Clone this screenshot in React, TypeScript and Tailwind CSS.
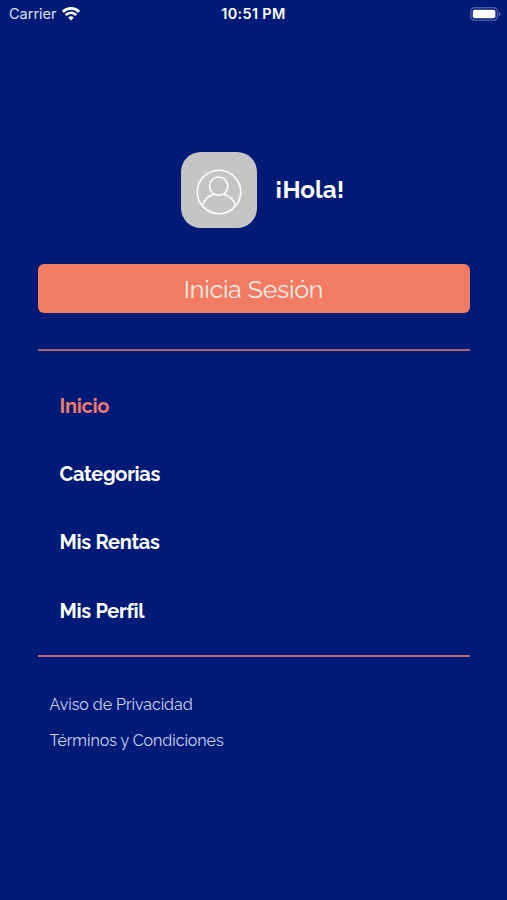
type MenuItem = {
  label: string;
  className: string;
};

const menuItems: MenuItem[] = [
  { label: 'Inicio', className: 'text-[#f07a68]' },
  { label: 'Categorias', className: 'text-white' },
  { label: 'Mis Rentas', className: 'text-white' },
  { label: 'Mis Perfil', className: 'text-white' },
];

const legalLinks = ['Aviso de Privacidad', 'Términos y Condiciones'];

function WifiIcon() {
  return (
    <svg width="18" height="14" viewBox="0 0 18 14" fill="none" stroke="white" strokeWidth="2.6">
      <path d="M0.9 4.8a11.4 11.4 0 0 1 16.2 0" />
      <path d="M3.8 8a7.3 7.3 0 0 1 10.4 0" />
      <path d="M9 13.4 6.2 10.5a4 4 0 0 1 5.6 0Z" fill="white" stroke="none" />
    </svg>
  );
}

function BatteryIcon() {
  return (
    <svg width="32" height="14" viewBox="0 0 32 14" fill="none">
      <rect x="0.8" y="0.8" width="26.6" height="12.4" rx="3.6" stroke="#6070b0" strokeWidth="1.1" />
      <rect x="2.8" y="2.7" width="22.6" height="8.6" rx="1.8" fill="white" />
      <path d="M28.9 4.8c2.2.8 2.2 3.6 0 4.4Z" fill="#6070b0" />
    </svg>
  );
}

function StatusBar() {
  return (
    <div className="grid grid-cols-3 items-center h-7 pl-[9px] pr-[5px] font-['Inter','Liberation_Sans',sans-serif] text-white">
      <div className="flex items-center gap-[5px]">
        <span className="text-[14.5px] leading-none text-[#dde3f5]">Carrier</span>
        <WifiIcon />
      </div>
      <span className="-ml-1 text-center text-[14.4px] leading-none font-semibold tracking-[0.35px] whitespace-nowrap">
        10:51 PM
      </span>
      <div className="flex justify-end">
        <BatteryIcon />
      </div>
    </div>
  );
}

function Avatar() {
  return (
    <div className="w-[76px] h-[76px] rounded-[20px] bg-[#c5c5c5] flex items-center justify-center">
      <svg width="46" height="46" viewBox="0 0 46 46" fill="none" stroke="white" strokeWidth="1.6" className="mt-[3px]">
        <circle cx="23" cy="23" r="21.7" />
        <circle cx="22.7" cy="17.2" r="9.2" />
        <path d="M6.2 36.8C8.4 30.4 12.6 26.6 18.2 25.2M27.4 25.2C33.2 26.6 37.6 30.4 39.8 36.8" />
      </svg>
    </div>
  );
}

export default function App() {
  return (
    <div className="w-full h-[900px] overflow-hidden bg-[#001a78] font-['Raleway','Lato',sans-serif]">
      <StatusBar />

      <main className="px-[37.5px] pt-[124px]">
        {/* Greeting */}
        <div className="flex items-center pl-[143.5px] gap-[18px]">
          <Avatar />
          <h1 className="text-[24.3px] leading-8 font-bold text-white">¡Hola!</h1>
        </div>

        <button className="mt-9 w-full h-[49px] pt-0.5 rounded-md bg-[#f27b63] text-[25px] leading-none tracking-[-0.22px] text-[#fff0e8]">
          Inicia Sesión
        </button>

        {/* Menu */}
        <hr className="mt-9 h-0.5 border-0 bg-[#a9627a]" />
        <nav className="h-[304px] pt-[20.5px] pl-[22px]">
          {menuItems.map((item) => (
            <a
              key={item.label}
              className={`flex items-center h-[68.4px] text-[20px] font-bold tracking-[-0.3px] [font-variant-ligatures:common-ligatures] ${item.className}`}
            >
              {item.label}
            </a>
          ))}
        </nav>
        <hr className="h-0.5 border-0 bg-[#b2667a]" />

        {/* Legal */}
        <footer className="pt-[30px] pl-3">
          {legalLinks.map((label) => (
            <a key={label} className="flex items-center h-9 text-[16px] tracking-[-0.05px] text-[#cbd5f0]">
              {label}
            </a>
          ))}
        </footer>
      </main>
    </div>
  );
}
